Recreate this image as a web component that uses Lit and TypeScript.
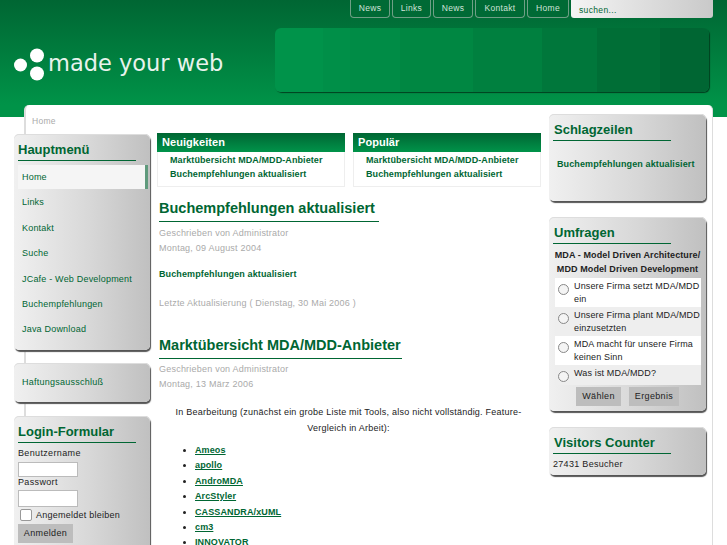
import { LitElement, html, css } from "lit";
import { customElement } from "lit/decorators.js";

@customElement("app-root")
export class AppRoot extends LitElement {
  static styles = css`
    :host { display: block; width: 727px; height: 545px; overflow: hidden; font-family: "Liberation Sans", Arial, sans-serif; font-size: 9.5px; color: #222; background: #fff; }
    * { box-sizing: border-box; }
    .page { height: 545px; overflow: hidden; background: linear-gradient(#006633 0, #009348 105px) 0 0 / 100% 117px no-repeat; }
    header { height: 105px; padding: 0 14px; display: flex; flex-direction: column; }
    .top { display: flex; justify-content: flex-end; align-items: flex-start; gap: 2px; height: 28px; }
    .tab { height: 18px; padding-top: 3px; text-align: center; border: 1px solid #6f9f86; border-top: 0; border-radius: 0 0 4px 4px; color: #cfe3d8; font-size: 8.5px; letter-spacing: .3px; background: #006a35; }
    .search { width: 142px; height: 18px; padding: 5px 0 0 8px; border-radius: 0 0 3px 3px; background: linear-gradient(90deg, #f4f4f4, #c9c9c9); color: #006633; font-size: 8.5px; letter-spacing: .35px; }
    .banner { display: flex; justify-content: space-between; height: 64px; }
    .logo { display: flex; align-items: center; gap: 3px; padding-top: 6px; height: 64px; color: #e8f3ed; font: 22.5px "DejaVu Sans", sans-serif; }
    .logo svg { margin-top: 2px; }
    .hero { width: 434px; margin-right: 4px; height: 64px; border-radius: 6px; box-shadow: 1px 1px 1px #00401f;
      background: linear-gradient(90deg, #00934a 0 48px, #008f48 48px 75px, #008c46 75px 125px, #008742 125px 198px, #00803f 198px 267px, #00773b 267px 322px, #006e36 322px 385px, #006633 385px); }
    .panel { margin: 0 14px 0 24px; height: 440px; background: #fff; border-left: 2px solid #ddd; border-right: 1px solid #ddd; border-radius: 5px 5px 0 0; position: relative; }
    .crumb { position: absolute; left: 6px; top: 11px; color: #aaa; font-size: 8.5px; letter-spacing: .3px; }
    .cols { display: grid; grid-template-columns: 136px 387px 157px; column-gap: 6px; margin-left: -12px; }
    .box { border-radius: 5px; background: linear-gradient(90deg, #f0f0f0, #d8d8d8 55%, #c0c0c0); box-shadow: inset 0 1px 0 #ddd, 1px 2px 1px #555; padding: 0 4px; }
    .left { padding-top: 29px; display: flex; flex-direction: column; gap: 13px; }
    .right { padding-top: 9px; display: flex; flex-direction: column; gap: 16px; }
    .right h3 { text-indent: 1px; }
    .box h3 { margin: 0; font-size: 13px; font-weight: bold; color: #006633; height: 27px; padding-top: 7px; border-bottom: 1px solid #006633; width: 118px; line-height: 17px; }
    .menu { padding-top: 4px; }
    .menu a { display: block; height: 25.4px; line-height: 25.4px; padding-left: 4px; color: #006633; font-size: 9px; letter-spacing: .2px; }
    .menu a.on { background: #f5f5f5; border-right: 3px solid #5f9a7c; margin-right: -2px; height: 24px; line-height: 24px; margin-bottom: 1.4px; }
    .m1 { height: 216px; }
    .m2 { height: 39px; padding: 14px 0 0 8px; color: #006633; font-size: 9px; letter-spacing: .25px; }
    .login { height: 200px; margin-top: 1px; }
    .login label { display: block; font-size: 9px; letter-spacing: .35px; height: 11px; line-height: 11px; }
    .login .first { margin-top: 5px; }
    .login .inp { display: block; width: 60px; height: 15px; background: #fff; border: 1px solid #bbb; margin-top: 3px; }
    .login .inp2 { height: 17px; margin-top: 2px; }
    .chk { display: flex; align-items: center; gap: 4px; margin: 2px 0 0 2px; height: 12px; font-size: 9px; letter-spacing: .25px; }
    .chk i { width: 12px; height: 12px; background: #fff; border: 1px solid #999; border-radius: 2px; }
    .btn { display: inline-block; background: #bdbdbd; text-align: center; font-size: 9px; letter-spacing: .35px; color: #222; }
    .login .btn { display: block; width: 55px; height: 19px; line-height: 19px; margin-top: 3px; }
    .forgot { margin-top: 2px; color: #006633; font-weight: bold; font-size: 9px; }
    .mid { padding: 28px 2px 0 1px; }
    .mods { display: grid; grid-template-columns: 188px 188px; gap: 8px; }
    .mod { height: 54px; border: 1px solid #eee; border-top: 0; }
    .mod h4 { margin: 0 -1px; height: 19px; line-height: 18px; padding-left: 5px; color: #fff; font-size: 11px; background: linear-gradient(#006633, #00934a); letter-spacing: .05px; }
    .mod p { margin: 0; padding-left: 12px; font-weight: bold; color: #006633; font-size: 9px; line-height: 14px; letter-spacing: .08px; }
    .mod .l { padding-top: 1px; }
    .art { padding-left: 2px; margin-top: 11px; }
    .art h2 { display: inline-block; margin: 0 0 4px; font-size: 14.5px; line-height: 20px; color: #006633; border-bottom: 1px solid #006633; padding: 0 4px 3px 0; }
    .meta { color: #aaa; font-size: 9px; letter-spacing: .22px; line-height: 15px; }
    .b { font-weight: bold; color: #006633; font-size: 9px; letter-spacing: .12px; }
    .gap1 { margin-top: 13px; }
    .gap2 { margin-top: 17px; }
    .art h2.h2b { margin: 24px 0 3px; padding-right: 1px; }
    .c { text-align: center; font-size: 9px; line-height: 15.5px; letter-spacing: .23px; margin: 13px 3px 0 0; }
    ul { margin: 7px 0 0; padding: 0 0 0 36px; list-style: disc; }
    li { height: 15.4px; line-height: 15.4px; font-size: 9px; }
    li a { font-weight: bold; color: #006633; text-decoration: underline; letter-spacing: .12px; }
    .s1 { height: 87px; }
    .s1 .b { margin: 18px 0 0 4px; }
    .poll { height: 194px; }
    .poll .q { text-align: center; font-weight: bold; font-size: 9px; letter-spacing: .1px; line-height: 14px; margin: 4px 0 2px; }
    .opt { display: flex; background: #fff; width: 146px; margin-left: 2px; font-size: 9px; letter-spacing: .15px; line-height: 13px; align-items: flex-start; padding-left: 3px; gap: 5px; height: 29px; }
    .opt.alt { background: #eee; }
    .opt.s { height: 20px; }
    .opt i { width: 11px; height: 11px; flex: none; border: 1px solid #888; border-radius: 50%; background: #f4f4f4; margin-top: 5.5px; }
    .opt span { padding-top: 1.5px; white-space: nowrap; }
    .row { display: flex; gap: 8px; margin-top: 2px; padding-left: 23px; }
    .row .btn { width: 45px; height: 19px; line-height: 18px; }
    .row .btn + .btn { width: 50px; }
    .vc { height: 48px; }
    .vc p { margin: 5px 0 0; font-size: 9px; letter-spacing: .3px; }
  `;

  render() {
    const menu = ["Home", "Links", "Kontakt", "Suche", "JCafe - Web Development", "Buchempfehlungen", "Java Download"];
    const tabs: [string, number][] = [["News", 40], ["Links", 39], ["News", 40], ["Kontakt", 50], ["Home", 42]];
    const tools = ["Ameos", "apollo", "AndroMDA", "ArcStyler", "CASSANDRA/xUML", "cm3", "INNOVATOR"];
    return html`<div class="page">
      <header>
        <div class="top">
          ${tabs.map(([t, w]) => html`<div class="tab" style="width:${w}px">${t}</div>`)}
          <div class="search">suchen...</div>
        </div>
        <div class="banner">
          <div class="logo">
            <svg width="31" height="33" viewBox="0 0 31 33"><circle cx="6.5" cy="17" r="6.5" fill="#fff"/><circle cx="23" cy="7.5" r="7" fill="#fff"/><circle cx="23" cy="25.5" r="7" fill="#fff"/></svg>
            <span>made your web</span>
          </div>
          <div class="hero"></div>
        </div>
      </header>
      <div class="panel">
        <div class="crumb">Home</div>
        <div class="cols">
          <div class="left">
            <div class="box m1"><h3>Hauptmenü</h3>
              <div class="menu">${menu.map((m, i) => html`<a class=${i === 0 ? "on" : ""}>${m}</a>`)}</div>
            </div>
            <div class="box m2">Haftungsausschluß</div>
            <div class="box login"><h3>Login-Formular</h3>
              <label class="first">Benutzername</label><span class="inp"></span>
              <label>Passwort</label><span class="inp inp2"></span>
              <div class="chk"><i></i>Angemeldet bleiben</div>
              <span class="btn">Anmelden</span>
              <div class="forgot">Passwort vergessen?</div>
            </div>
          </div>
          <div class="mid">
            <div class="mods">
              ${["Neuigkeiten", "Populär"].map((t) => html`<div class="mod"><h4>${t}</h4><div class="l"><p>Marktübersicht MDA/MDD-Anbieter</p><p>Buchempfehlungen aktualisiert</p></div></div>`)}
            </div>
            <div class="art">
              <h2>Buchempfehlungen aktualisiert</h2>
              <div class="meta">Geschrieben von Administrator</div>
              <div class="meta">Montag, 09 August 2004</div>
              <div class="b gap1">Buchempfehlungen aktualisiert</div>
              <div class="meta gap2">Letzte Aktualisierung ( Dienstag, 30 Mai 2006 )</div>
              <h2 class="h2b">Marktübersicht MDA/MDD-Anbieter</h2>
              <div class="meta">Geschrieben von Administrator</div>
              <div class="meta">Montag, 13 März 2006</div>
              <div class="c">In Bearbeitung (zunächst ein grobe Liste mit Tools, also nicht vollständig. Feature-Vergleich in Arbeit):</div>
              <ul>${tools.map((t) => html`<li><a>${t}</a></li>`)}</ul>
            </div>
          </div>
          <div class="right">
            <div class="box s1"><h3>Schlagzeilen</h3><div class="b">Buchempfehlungen aktualisiert</div></div>
            <div class="box poll"><h3>Umfragen</h3>
              <div class="q">MDA - Model Driven Architecture/<br>MDD Model Driven Development</div>
              <div class="opt"><i></i><span>Unsere Firma setzt MDA/MDD<br>ein</span></div>
              <div class="opt alt"><i></i><span>Unsere Firma plant MDA/MDD<br>einzusetzten</span></div>
              <div class="opt"><i></i><span>MDA macht für unsere Firma<br>keinen Sinn</span></div>
              <div class="opt alt s"><i></i><span>Was ist MDA/MDD?</span></div>
              <div class="row"><span class="btn">Wählen</span><span class="btn">Ergebnis</span></div>
            </div>
            <div class="box vc"><h3>Visitors Counter</h3><p>27431 Besucher</p></div>
          </div>
        </div>
      </div>
    </div>`;
  }
}
